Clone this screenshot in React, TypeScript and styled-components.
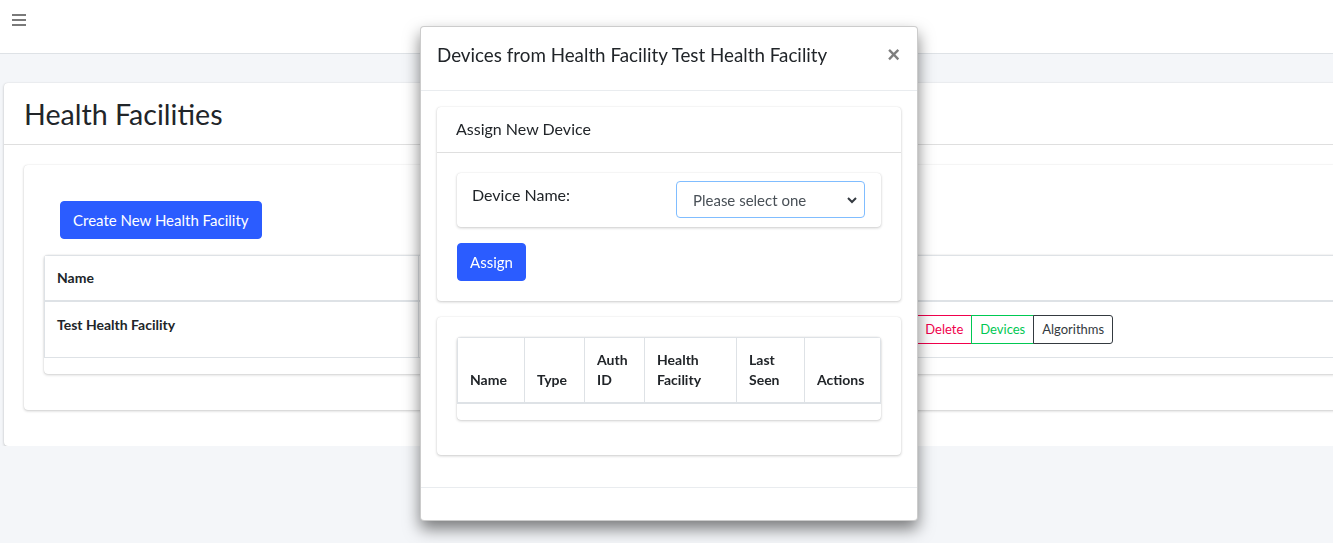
import React from 'react';
import styled, { createGlobalStyle } from 'styled-components';

const GlobalStyle = createGlobalStyle`
  html, body {
    margin: 0;
    padding: 0;
  }
  body {
    background: #f4f6f9;
    color: #212529;
    font-family: "Lato", "Liberation Sans", sans-serif;
    font-size: 14px;
    line-height: 1.5;
    overflow: hidden;
  }
  * {
    box-sizing: border-box;
  }
`;

const Navbar = styled.header`
  height: 54px;
  background: #fff;
  border-bottom: 1px solid #dee2e6;
  display: flex;
  align-items: flex-start;
  padding: 13px 0 0 12px;
`;

const MenuButton = styled.button`
  border: 0;
  background: none;
  padding: 0;
  width: 14px;
  height: 14px;
  color: #7a7a7a;
  display: flex;
  cursor: pointer;
`;

const Content = styled.main`
  padding: 29px 0 0 4px;
  overflow: hidden;
`;

const Card = styled.section`
  background: #fff;
  border-radius: 4px;
  margin-right: -24px;
  box-shadow: 0 0 1px rgba(0, 0, 0, 0.125), 0 1px 3px rgba(0, 0, 0, 0.2);
`;

const CardHeader = styled.div`
  padding: 12px 20px 11px;
  border-bottom: 1px solid rgba(0, 0, 0, 0.125);
`;

const PageTitle = styled.h1`
  margin: 0;
  font-size: 28.6px;
  font-weight: 400;
  line-height: 38px;
  color: #212529;
`;

const CardBody = styled.div`
  padding: 20px 20px 36px;
`;

const InnerCard = styled.div`
  background: #fff;
  border-radius: 4px;
  padding: 36px 0 36px 20px;
  box-shadow: 0 0 1px rgba(0, 0, 0, 0.125), 0 1px 3px rgba(0, 0, 0, 0.2);
`;

const Toolbar = styled.div`
  padding: 0 16px 16px;
`;

const PrimaryButton = styled.button`
  font-family: inherit;
  font-size: 15px;
  line-height: 24px;
  padding: 6px 12px;
  color: #fff;
  background: #2b5cff;
  border: 1px solid #2b5cff;
  border-radius: 4px;
  cursor: pointer;
`;

const TableWrap = styled.div`
  background: #fff;
  border-radius: 4px;
  overflow: hidden;
  padding-bottom: 16px;
  box-shadow: 0 0 1px rgba(0, 0, 0, 0.2), 0 1px 3px rgba(0, 0, 0, 0.18);
`;

const Table = styled.table<{ $fixed?: boolean }>`
  width: 100%;
  border-collapse: collapse;
  table-layout: ${(p) => (p.$fixed ? 'fixed' : 'auto')};
`;

const HeadCell = styled.th<{ $w?: number }>`
  width: ${(p) => (p.$w ? `${p.$w}px` : 'auto')};
  text-align: left;
  vertical-align: bottom;
  font-weight: 700;
  font-size: 14px;
  line-height: 20px;
  padding: 12px 12px;
  border: 1px solid #dee2e6;
  border-bottom-width: 2px;
  color: #212529;
`;

const OuterHeadCell = styled(HeadCell)`
  line-height: 21px;
  padding: 11px 12px 12px;
`;

const BodyCell = styled.td<{ $middle?: boolean }>`
  vertical-align: ${(p) => (p.$middle ? 'middle' : 'top')};
  padding: ${(p) => (p.$middle ? '13px 12px' : '12px')};
  border: 1px solid #dee2e6;
  line-height: 21px;
`;

const StrongText = styled.span`
  font-weight: 700;
`;

const ButtonGroup = styled.div`
  display: inline-flex;
`;

const OutlineButton = styled.button<{ $color: string; $first?: boolean; $last?: boolean }>`
  font-family: inherit;
  font-size: 13px;
  line-height: 19px;
  padding: 4px 8px;
  background: #fff;
  color: ${(p) => p.$color};
  border: 1px solid ${(p) => p.$color};
  margin-left: ${(p) => (p.$first ? '0' : '-1px')};
  border-radius: ${(p) => (p.$first ? '3px 0 0 3px' : p.$last ? '0 3px 3px 0' : '0')};
  cursor: pointer;
`;

/* modal */

const ModalDialog = styled.div`
  position: fixed;
  top: 26px;
  left: 420px;
  width: 498px;
  background: #fff;
  border: 1px solid rgba(0, 0, 0, 0.2);
  border-radius: 4px;
  box-shadow: 0 8px 16px rgba(0, 0, 0, 0.5);
`;

const ModalHeader = styled.div`
  display: flex;
  align-items: center;
  justify-content: space-between;
  padding: 12px 16px 20px;
  border-bottom: 1px solid #e9ecef;
`;

const ModalTitle = styled.h5`
  margin: 0;
  font-size: 18.8px;
  font-weight: 400;
  line-height: 31px;
  color: #212529;
`;

const CloseButton = styled.button`
  border: 0;
  background: none;
  padding: 0;
  font-family: "Liberation Sans", Arial, sans-serif;
  font-size: 22px;
  font-weight: 700;
  line-height: 1;
  color: #000;
  opacity: 0.5;
  margin-right: 1px;
  cursor: pointer;
`;

const ModalBody = styled.div`
  padding: 16px;
`;

const ModalFooter = styled.div`
  height: 33px;
  border-top: 1px solid #e9ecef;
`;

const SubCard = styled.div`
  background: #fff;
  border-radius: 4px;
  margin-bottom: 16px;
  box-shadow: 0 0 1px rgba(0, 0, 0, 0.125), 0 1px 3px rgba(0, 0, 0, 0.2);
`;

const SubCardHeader = styled.div`
  padding: 10px 20px 11px 19px;
  border-bottom: 1px solid rgba(0, 0, 0, 0.125);
  font-size: 16px;
  line-height: 24px;
`;

const SubCardBody = styled.div<{ $tall?: boolean }>`
  padding: ${(p) => (p.$tall ? '20px 20px 35px' : '20px')};
`;

const FieldRow = styled.div`
  display: flex;
  justify-content: space-between;
  align-items: flex-start;
  padding: 8px 16px 9px 15px;
  margin-bottom: 16px;
  border-radius: 4px;
  box-shadow: 0 0 1px rgba(0, 0, 0, 0.125), 0 1px 3px rgba(0, 0, 0, 0.2);
`;

const FieldLabel = styled.label`
  font-size: 16px;
  line-height: 24px;
  padding-top: 2px;
`;

const SelectWrap = styled.div`
  position: relative;
  width: 189px;
`;

const Select = styled.select`
  width: 100%;
  height: 37px;
  appearance: none;
  font-family: inherit;
  font-size: 15px;
  color: #495057;
  padding: 0 28px 0 16px;
  border: 1px solid #80bdff;
  border-radius: 4px;
  background: #fff;
  outline: none;
`;

const Chevron = styled.svg`
  position: absolute;
  right: 8px;
  top: 15px;
  width: 10px;
  height: 8px;
  pointer-events: none;
`;

export default function App() {
  return (
    <>
      <GlobalStyle />
      <Navbar>
        <MenuButton aria-label="menu">
          <svg width="14" height="14" viewBox="0 0 14 14">
            <rect x="0" y="1" width="14" height="2" fill="currentColor" />
            <rect x="0" y="6" width="14" height="2" fill="currentColor" />
            <rect x="0" y="11" width="14" height="2" fill="currentColor" />
          </svg>
        </MenuButton>
      </Navbar>
      <Content>
        <Card>
          <CardHeader>
            <PageTitle>Health Facilities</PageTitle>
          </CardHeader>
          <CardBody>
            <InnerCard>
              <Toolbar>
                <PrimaryButton>Create New Health Facility</PrimaryButton>
              </Toolbar>
              <TableWrap>
                <Table $fixed>
                  <thead>
                    <tr>
                      <OuterHeadCell $w={374}>Name</OuterHeadCell>
                      <OuterHeadCell $w={400}>Location</OuterHeadCell>
                      <OuterHeadCell>Actions</OuterHeadCell>
                    </tr>
                  </thead>
                  <tbody>
                    <tr>
                      <BodyCell>
                        <StrongText>Test Health Facility</StrongText>
                      </BodyCell>
                      <BodyCell />
                      <BodyCell $middle>
                        <ButtonGroup>
                          <OutlineButton $color="#17a2b8" $first>View</OutlineButton>
                          <OutlineButton $color="#2b5cff">Edit</OutlineButton>
                          <OutlineButton $color="#f0004c">Delete</OutlineButton>
                          <OutlineButton $color="#00c853">Devices</OutlineButton>
                          <OutlineButton $color="#343a40" $last>Algorithms</OutlineButton>
                        </ButtonGroup>
                      </BodyCell>
                    </tr>
                  </tbody>
                </Table>
              </TableWrap>
            </InnerCard>
          </CardBody>
        </Card>
      </Content>

      <ModalDialog role="dialog">
        <ModalHeader>
          <ModalTitle>Devices from Health Facility Test Health Facility</ModalTitle>
          <CloseButton aria-label="close">×</CloseButton>
        </ModalHeader>
        <ModalBody>
          <SubCard>
            <SubCardHeader>Assign New Device</SubCardHeader>
            <SubCardBody>
              <FieldRow>
                <FieldLabel>Device Name:</FieldLabel>
                <SelectWrap>
                  <Select defaultValue="">
                    <option value="">Please select one</option>
                  </Select>
                  <Chevron viewBox="0 0 10 8">
                    <path d="M1 2 L5 6 L9 2" fill="none" stroke="#343a40" strokeWidth="2" />
                  </Chevron>
                </SelectWrap>
              </FieldRow>
              <PrimaryButton>Assign</PrimaryButton>
            </SubCardBody>
          </SubCard>
          <SubCard>
            <SubCardBody $tall>
              <TableWrap>
                <Table $fixed>
                  <thead>
                    <tr>
                      <HeadCell $w={67}>Name</HeadCell>
                      <HeadCell $w={60}>Type</HeadCell>
                      <HeadCell $w={60}>Auth ID</HeadCell>
                      <HeadCell $w={92}>Health Facility</HeadCell>
                      <HeadCell $w={68}>Last Seen</HeadCell>
                      <HeadCell>Actions</HeadCell>
                    </tr>
                  </thead>
                  <tbody />
                </Table>
              </TableWrap>
            </SubCardBody>
          </SubCard>
        </ModalBody>
        <ModalFooter />
      </ModalDialog>
    </>
  );
}
